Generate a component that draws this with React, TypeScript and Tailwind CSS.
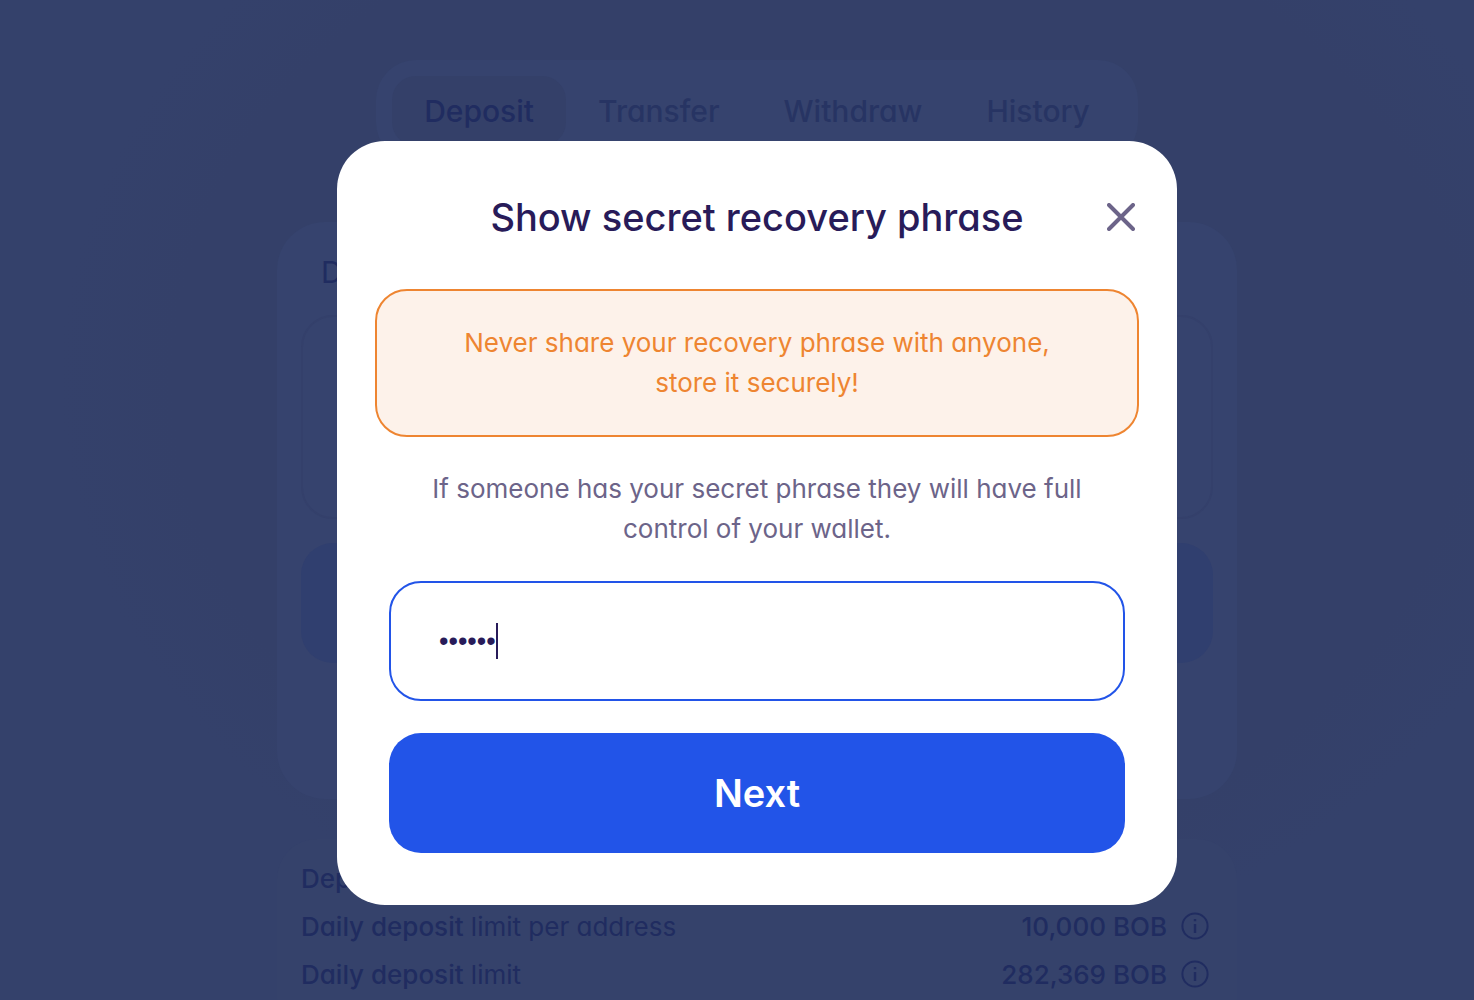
import { useState } from "react";

const tabs = ["Deposit", "Transfer", "Withdraw", "History"];

const limits = [
  { strong: "Deposit", rest: "", value: "" },
  { strong: "Daily deposit", rest: "limit per address", value: "10,000 BOB" },
  { strong: "Daily deposit", rest: "limit", value: "282,369 BOB" },
];

function InfoIcon() {
  return (
    <svg viewBox="0 0 28 28" className="size-7" fill="none" stroke="currentColor" strokeWidth="2" aria-hidden="true">
      <circle cx="14" cy="14" r="12.6" />
      <path d="M14 12v9M14 7v2.2" strokeWidth="2.4" />
    </svg>
  );
}

function Page() {
  return (
    <div className="flex h-full flex-col items-center pt-15 pl-10 text-[#202c60]">
      <nav className="flex rounded-[40px] bg-[#36436e] p-4">
        {tabs.map((tab, i) => (
          <button
            key={tab}
            type="button"
            className={
              i === 0
                ? "h-[70px] rounded-3xl bg-[#344069] px-8 text-[30px] font-medium text-[#202c60]"
                : "h-[70px] rounded-3xl px-8 text-[30px] font-medium text-[#273463]"
            }
          >
            {tab}
          </button>
        ))}
      </nav>

      <section className="mt-15 h-[577px] w-full max-w-[960px] shrink-0 rounded-[48px] bg-[#36436e] px-6 pt-7">
        <h2 className="pl-5 text-[30px] leading-[44px]">Deposit</h2>
        <div className="mt-[21px] h-[204px] rounded-[32px] border-2 border-[#34406b]" />
        <div className="mt-6 h-30 rounded-[32px] bg-[#303f6f]" />
      </section>

      <section className="mt-10 w-full max-w-[960px] shrink-0 rounded-[40px] bg-[#35426b] px-6 pt-[15px] pb-10">
        {limits.map((row, i) => (
          <div key={i} className="flex h-12 items-center justify-between pr-1 text-[26px]">
            <p>
              <span className="font-medium">{row.strong}</span> {row.rest}
            </p>
            {row.value && (
              <p className="flex items-center gap-3.5 font-medium">
                {row.value}
                <InfoIcon />
              </p>
            )}
          </div>
        ))}
      </section>
    </div>
  );
}

function Dialog() {
  const [password, setPassword] = useState("secret");
  return (
    <div className="absolute inset-0 flex items-start justify-center pt-[141px] pl-10">
      <div
        role="dialog"
        aria-labelledby="dialog-title"
        className="w-full max-w-[840px] rounded-[48px] bg-white px-[38px] pt-12 pb-[52px] text-center"
      >
        <header className="relative">
          <h1 id="dialog-title" className="text-[38px] leading-14 font-medium text-[#281b59]">
            Show secret recovery phrase
          </h1>
          <button type="button" aria-label="Close" className="absolute top-3.5 right-1 text-[#6c6489]">
            <svg viewBox="0 0 28 28" className="size-7" fill="none" stroke="currentColor" strokeWidth="4" strokeLinecap="round">
              <path d="M2 2l24 24M26 2L2 26" />
            </svg>
          </button>
        </header>

        <p className="mt-11 rounded-[32px] border-2 border-[#ee8531] bg-[#fdf2ea] px-16 py-8 text-[26px] leading-10 text-[#ee8531]">
          Never share your recovery phrase with anyone,
          <br />
          store it securely!
        </p>

        <p className="mt-8 text-[26px] leading-10 text-[#6c6489]">
          If someone has your secret phrase they will have full
          <br />
          control of your wallet.
        </p>

        <form className="px-3.5" onSubmit={(e) => e.preventDefault()}>
          <label className="mt-8 flex h-30 items-center rounded-[32px] border-2 border-[#2254e8] px-12 text-[#281b59]">
            <input
              type="password"
              aria-label="Password"
              value={password}
              onChange={(e) => setPassword(e.target.value)}
              className="field-sizing-content font-['Liberation_Sans',sans-serif] text-[27px] leading-9 caret-transparent outline-none"
            />
            <span className="h-9 w-0.5 bg-[#281b59]" />
          </label>
          <button type="submit" className="mt-8 h-30 w-full rounded-[32px] bg-[#2254e8] text-[38px] font-semibold text-white">
            Next
          </button>
        </form>
      </div>
    </div>
  );
}

export default function App() {
  return (
    <main className="relative h-screen overflow-hidden bg-[#34416b] bg-[radial-gradient(ellipse_760px_600px_at_820px_380px,#344069_85%,#34416b_100%)] font-['Inter',sans-serif] [font-feature-settings:'cv11']">
      <Page />
      <Dialog />
    </main>
  );
}
